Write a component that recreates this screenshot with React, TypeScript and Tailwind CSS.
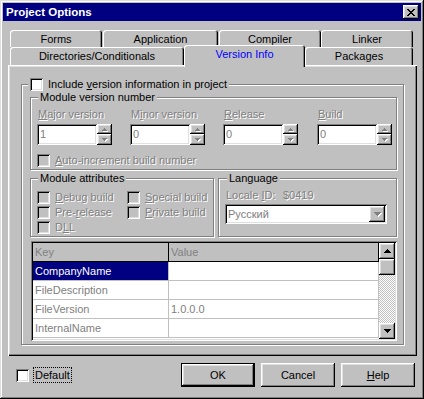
import React from "react";

const raised =
  "shadow-[inset_-1px_-1px_#000,inset_1px_1px_#fff,inset_-2px_-2px_#808080,inset_2px_2px_#dfdfdf]";
const sunken =
  "shadow-[inset_1px_1px_#808080,inset_-1px_-1px_#fff,inset_2px_2px_#000,inset_-2px_-2px_#dfdfdf]";
const etched = "border border-[#808080] shadow-[inset_1px_1px_#fff,1px_1px_#fff]";
const dim = "text-[#808080] [text-shadow:1px_1px_0_#fff]";
const tab =
  "bg-[#c0c0c0] rounded-t-[3px] shadow-[inset_1px_1px_#fff,inset_-1px_0_#000,inset_-2px_0_#808080] text-center shrink-0";

function Check({ disabled }: { disabled?: boolean }) {
  return (
    <span
      className={`block w-[13px] h-[13px] shrink-0 ${disabled ? "bg-[#c0c0c0]" : "bg-white"} ${sunken}`}
    />
  );
}

function Arrow({ down, color = "#000", w = 7 }: { down?: boolean; color?: string; w?: number }) {
  const rows = w === 7 ? [1, 3, 5, 7] : [1, 3, 5];
  const h = rows.length;
  const d = rows
    .map((r, i) => {
      const y = down ? h - 1 - i : i;
      const x = (w - r) / 2;
      return `M${x} ${y}h${r}v1h-${r}z`;
    })
    .join("");
  return (
    <svg width={w} height={h} viewBox={`0 0 ${w} ${h}`} shapeRendering="crispEdges" className="block">
      <path d={d} fill={color} />
    </svg>
  );
}

function DimArrow({ down, w = 5 }: { down?: boolean; w?: number }) {
  return (
    <span className="relative block">
      <span className="absolute left-[1px] top-[1px]">
        <Arrow down={down} color="#fff" w={w} />
      </span>
      <span className="relative">
        <Arrow down={down} color="#808080" w={w} />
      </span>
    </span>
  );
}

function SpinEdit({ value }: { value: string }) {
  return (
    <div className="flex h-[21px]">
      <div className={`w-[60px] h-full bg-white ${sunken} pl-[3px] flex items-center text-[#808080]`}>
        {value}
      </div>
      <div className="flex flex-col w-[15px] h-full">
        <div className={`h-[10px] bg-[#c0c0c0] ${raised} flex items-center justify-center`}>
          <DimArrow />
        </div>
        <div className={`h-[11px] bg-[#c0c0c0] ${raised} flex items-center justify-center`}>
          <DimArrow down />
        </div>
      </div>
    </div>
  );
}

function DimCheck({ children }: { children: React.ReactNode }) {
  return (
    <div className="flex items-center gap-[5px] h-[13px]">
      <Check disabled />
      <span className={dim}>{children}</span>
    </div>
  );
}

const ROWS = [
  ["CompanyName", ""],
  ["FileDescription", ""],
  ["FileVersion", "1.0.0.0"],
  ["InternalName", ""],
];

export default function App() {
  return (
    <div
      className={`w-[424px] h-[399px] bg-[#c0c0c0] p-[3px] flex flex-col font-['Liberation_Sans',Arial,sans-serif] text-[11px] leading-[13px] text-black shadow-[inset_-1px_-1px_#000,inset_1px_1px_#dfdfdf,inset_-2px_-2px_#808080,inset_2px_2px_#fff]`}
    >
      {/* title bar */}
      <div className="h-[18px] bg-[#000080] flex items-center pl-[3px] pr-[2px] shrink-0">
        <span className="text-white font-bold text-[11.5px]">Project Options</span>
        <div className={`ml-auto w-[16px] h-[14px] bg-[#c0c0c0] ${raised} flex items-center justify-center`}>
          <svg width="8" height="7" viewBox="0 0 8 7" shapeRendering="crispEdges" className="block">
            <path
              d="M0 0h2v1h-2zM6 0h2v1h-2zM1 1h2v1h-2zM5 1h2v1h-2zM2 2h4v1h-4zM3 3h2v1h-2zM2 4h4v1h-4zM1 5h2v1h-2zM5 5h2v1h-2zM0 6h2v1h-2zM6 6h2v1h-2z"
              fill="#000"
            />
          </svg>
        </div>
      </div>

      {/* tabs, back row */}
      <div className="mt-[9px] flex pl-[7px] h-[17px] shrink-0">
        <div className={`${tab} w-[92px] h-full pt-[3px]`}>Forms</div>
        <div className={`${tab} ml-[1px] w-[115px] h-full pt-[3px]`}>Application</div>
        <div className={`${tab} ml-[1px] w-[102px] h-full pt-[3px]`}>Compiler</div>
        <div className={`${tab} w-[92px] h-full pt-[3px]`}>Linker</div>
      </div>
      {/* tabs, front row */}
      <div className="-mt-[2px] flex items-start pl-[7px] h-[20px] shrink-0">
        <div className={`${tab} mt-[2px] w-[174px] h-[18px] pt-[3px]`}>Directories/Conditionals</div>
        <div className={`${tab} relative z-10 w-[121px] h-[22px] pt-[3px] text-[#0000ff]`}>Version Info</div>
        <div className={`${tab} mt-[2px] w-[108px] h-[18px] pt-[3px]`}>Packages</div>
      </div>

      {/* tab sheet */}
      <div
        className={`ml-[5px] w-[409px] h-[291px] shrink-0 pl-[13px] pt-[19px] shadow-[inset_1px_1px_#fff,inset_-1px_-1px_#000,inset_-2px_-2px_#808080,inset_2px_2px_#dfdfdf]`}
      >
        <div className={`${etched} w-[383px] h-[261px] flex flex-col`}>
          <div className="-mt-[7px] ml-[6px] px-[2px] bg-[#c0c0c0] self-start flex items-center gap-[5px]">
            <Check />
            <span>
              Include <u>v</u>ersion information in project
            </span>
          </div>

          {/* module version number */}
          <div className={`${etched} mt-[6px] ml-[8px] w-[367px] h-[73px] flex flex-col shrink-0`}>
            <div className="-mt-[7px] ml-[7px] px-[2px] bg-[#c0c0c0] self-start">Module version number</div>
            <div className="flex pl-[6px] mt-[4px]">
              {[
                [<><u>M</u>ajor version</>, "1", "w-[93px]"],
                [<>M<u>i</u>nor version</>, "0", "w-[93px]"],
                [<><u>R</u>elease</>, "0", "w-[94px]"],
                [<><u>B</u>uild</>, "0", ""],
              ].map(([label, value, w], i) => (
                <div key={i} className={`${w} flex flex-col`}>
                  <span className={`${dim} pl-[1px]`}>{label}</span>
                  <div className="mt-[3px]">
                    <SpinEdit value={value as string} />
                  </div>
                </div>
              ))}
            </div>
            <div className="ml-[6px] mt-[9px]">
              <DimCheck>
                <u>A</u>uto-increment build number
              </DimCheck>
            </div>
          </div>

          <div className="flex gap-[4px] mt-[8px] ml-[8px] shrink-0">
            {/* module attributes */}
            <div className={`${etched} w-[184px] h-[59px] flex flex-col`}>
              <div className="-mt-[7px] ml-[7px] px-[2px] bg-[#c0c0c0] self-start">Module attributes</div>
              <div className="flex ml-[6px] mt-[6px]">
                <div className="w-[90px] flex flex-col gap-[2px]">
                  <DimCheck>
                    <u>D</u>ebug build
                  </DimCheck>
                  <DimCheck>
                    Pre-<u>r</u>elease
                  </DimCheck>
                  <DimCheck>
                    D<u>L</u>L
                  </DimCheck>
                </div>
                <div className="flex flex-col gap-[2px]">
                  <DimCheck>
                    <u>S</u>pecial build
                  </DimCheck>
                  <DimCheck>
                    <u>P</u>rivate build
                  </DimCheck>
                </div>
              </div>
            </div>
            {/* language */}
            <div className={`${etched} w-[179px] h-[59px] flex flex-col`}>
              <div className="-mt-[7px] ml-[8px] px-[2px] bg-[#c0c0c0] self-start">Language</div>
              <div className={`${dim} ml-[7px] mt-[4px] flex`}>
                <span className="w-[57px]">
                  Locale <u>I</u>D:
                </span>
                <span>$0419</span>
              </div>
              <div
                className={`ml-[6px] mt-[2px] w-[162px] h-[20px] bg-white ${sunken} flex items-center pl-[3px] pr-[2px]`}
              >
                <span className="text-[#808080]">Русский</span>
                <div className={`ml-auto w-[16px] h-[16px] bg-[#c0c0c0] ${raised} flex items-center justify-center`}>
                  <DimArrow down w={7} />
                </div>
              </div>
            </div>
          </div>

          {/* string grid */}
          <div className={`mt-[4px] ml-[9px] w-[366px] h-[100px] p-[2px] bg-white ${sunken} flex shrink-0`}>
            <div className="w-[346px] flex flex-col">
              <div className="flex h-[19px] bg-[#c0c0c0] text-[#808080]">
                <div className="w-[136px] border-r border-b border-black flex items-center pl-[2px]">Key</div>
                <div className="w-[210px] border-r border-b border-black flex items-center pl-[2px]">Value</div>
              </div>
              {ROWS.map(([k, v], i) => (
                <div key={k} className="flex h-[19px]">
                  <div
                    className={`w-[136px] border-r border-b border-[#c0c0c0] flex items-center pl-[2px] ${i === 0 ? "bg-[#000080] text-white" : "text-[#808080]"}`}
                  >
                    {k}
                  </div>
                  <div className="w-[210px] border-r border-b border-[#c0c0c0] flex items-center pl-[2px] text-[#808080]">
                    {v}
                  </div>
                </div>
              ))}
            </div>
            <div className="w-[16px] flex flex-col">
              <div className={`h-[16px] bg-[#c0c0c0] ${raised} flex items-center justify-center`}>
                <Arrow />
              </div>
              <div className={`h-[16px] bg-[#c0c0c0] ${raised}`} />
              <div className="flex-1 bg-[repeating-conic-gradient(#fff_0_25%,#c0c0c0_0_50%)] bg-[length:2px_2px]" />
              <div className={`h-[16px] bg-[#c0c0c0] ${raised} flex items-center justify-center`}>
                <Arrow down />
              </div>
            </div>
          </div>
        </div>
      </div>

      {/* bottom */}
      <div className="mt-[7px] h-[24px] flex items-center pl-[13px] pr-[6px] shrink-0">
        <Check />
        <span className="ml-[4px] h-[16px] border border-dotted border-black px-[1px] flex items-center">
          Default
        </span>
        <div className="ml-auto flex gap-[6px]">
          <div className="w-[74px] h-[24px] border border-black">
            <div className={`w-full h-full ${raised} flex items-center justify-center`}>OK</div>
          </div>
          <div className={`w-[74px] h-[24px] ${raised} flex items-center justify-center`}>Cancel</div>
          <div className={`w-[74px] h-[24px] ${raised} flex items-center justify-center`}>
            <span>
              <u>H</u>elp
            </span>
          </div>
        </div>
      </div>
    </div>
  );
}
